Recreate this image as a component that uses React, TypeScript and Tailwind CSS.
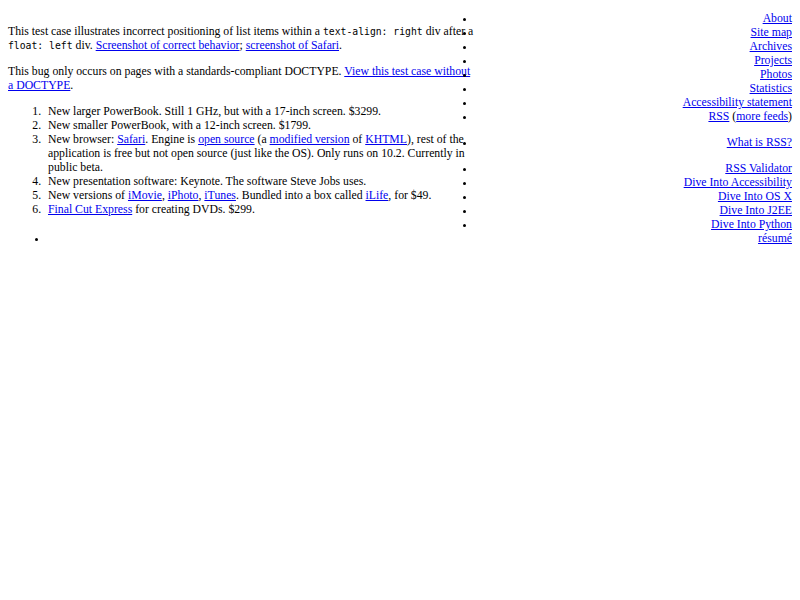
const mainNav = [
  'About',
  'Site map',
  'Archives',
  'Projects',
  'Photos',
  'Statistics',
  'Accessibility statement',
]

const sideProjects = [
  'RSS Validator',
  'Dive Into Accessibility',
  'Dive Into OS X',
  'Dive Into J2EE',
  'Dive Into Python',
  'résumé',
]

function A({ children }: { children: React.ReactNode }) {
  return (
    <a href="#" className="text-[#0000ee] underline">
      {children}
    </a>
  )
}

function Code({ children }: { children: React.ReactNode }) {
  return <code className="font-['DejaVu_Sans_Mono',monospace] text-[9.75px]">{children}</code>
}

export default function App() {
  return (
    <div className="min-h-[600px] bg-white px-2 pt-3 font-['Liberation_Serif',serif] text-[11.75px] leading-[14px] text-black">
      <div className="float-left w-[468px] pt-px">
        <p className="my-3">
          This test case illustrates incorrect positioning of list items within a <Code>text-align: right</Code> div
          after a <Code>float: left</Code> div. <A>Screenshot of correct behavior</A>; <A>screenshot of Safari</A>.
        </p>
        <p className="my-3">
          This bug only occurs on pages with a standards-compliant DOCTYPE. <A>View this test case without a DOCTYPE</A>.
        </p>
        <ol className="my-3 list-decimal pl-9 [&>li]:pl-1">
          <li>New larger PowerBook. Still 1 GHz, but with a 17-inch screen. $3299.</li>
          <li>New smaller PowerBook, with a 12-inch screen. $1799.</li>
          <li>
            New browser: <A>Safari</A>. Engine is <A>open source</A> (a <A>modified version</A> of <A>KHTML</A>), rest
            of the application is free but not open source (just like the OS). Only runs on 10.2. Currently in public
            beta.
          </li>
          <li>New presentation software: Keynote. The software Steve Jobs uses.</li>
          <li>
            New versions of <A>iMovie</A>, <A>iPhoto</A>, <A>iTunes</A>. Bundled into a box called <A>iLife</A>, for
            $49.
          </li>
          <li>
            <A>Final Cut Express</A> for creating DVDs. $299.
          </li>
        </ol>
      </div>

      <div className="text-right">
        <ul className="mb-3 list-disc pl-10">
          {mainNav.map((item) => (
            <li key={item}>
              <A>{item}</A>
            </li>
          ))}
          <li>
            <A>RSS</A> (<A>more feeds</A>)
          </li>
        </ul>
        <ul className="my-3 list-disc pl-10">
          <li>
            <A>What is RSS?</A>
          </li>
        </ul>
        <ul className="my-3 list-disc pl-10">
          {sideProjects.map((item) => (
            <li key={item}>
              <A>{item}</A>
            </li>
          ))}
        </ul>
      </div>
    </div>
  )
}
